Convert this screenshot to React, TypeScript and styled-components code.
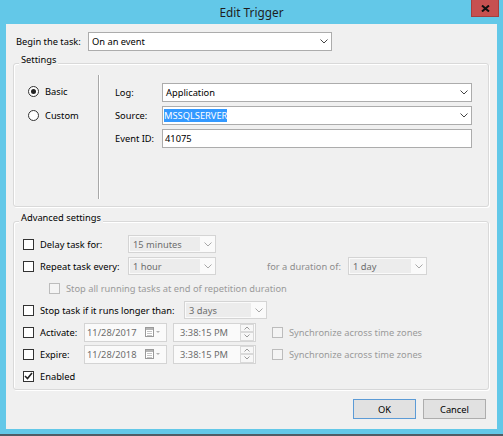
import React from 'react';
import styled, { createGlobalStyle } from 'styled-components';

const GlobalStyle = createGlobalStyle`
  html, body {
    margin: 0;
    padding: 0;
  }
  body {
    font-family: "Noto Sans", "DejaVu Sans", sans-serif;
    font-size: 9.3px;
    color: #000;
    background: #fff;
  }
  * {
    box-sizing: border-box;
  }
`;

const Window = styled.div`
  width: 503px;
  height: 436px;
  background: #63c8e8;
  border-bottom: 2px solid #4f5d66;
  display: flex;
  flex-direction: column;
`;

const TitleBar = styled.div`
  height: 24px;
  display: grid;
  grid-template-columns: 1fr auto 1fr;
  align-items: start;
`;

const Title = styled.div`
  grid-column: 2;
  font-size: 11.8px;
  line-height: 25px;
  color: #1e1e1e;
`;

const CloseButton = styled.div`
  grid-column: 3;
  justify-self: end;
  margin-right: 4px;
  width: 28px;
  height: 17px;
  background: #c75050;
  border: 1px solid #a53f3f;
  border-top: none;
  display: flex;
  align-items: center;
  justify-content: center;
`;

const Client = styled.div`
  margin: 0 6px;
  height: 405px;
  background: #f0f0f0;
  padding: 8px 8px 0 7px;
  display: flex;
  flex-direction: column;
`;

const BeginRow = styled.div`
  display: flex;
  align-items: center;
  height: 19px;
  padding-left: 3px;
`;

const FieldLabel = styled.span<{ $width: number }>`
  width: ${(p) => p.$width}px;
  flex-shrink: 0;
  white-space: nowrap;
`;

const Combo = styled.div<{ $width?: number; $height?: number; $disabled?: boolean }>`
  width: ${(p) => (p.$width ? `${p.$width}px` : '100%')};
  height: ${(p) => p.$height ?? 19}px;
  display: flex;
  align-items: stretch;
  background: ${(p) => (p.$disabled ? '#fafafa' : '#fff')};
  border: 1px solid ${(p) => (p.$disabled ? '#d4d4d4' : '#acacac')};
  color: ${(p) => (p.$disabled ? '#6d6d6d' : '#000')};
  flex-shrink: 0;
`;

const ComboValue = styled.div<{ $disabled?: boolean; $pad?: number }>`
  flex: 1;
  display: flex;
  align-items: center;
  padding-left: ${(p) => p.$pad ?? 3}px;
  margin: ${(p) => (p.$disabled ? '1px 0 1px 1px' : '0')};
  background: ${(p) => (p.$disabled ? '#ececec' : 'transparent')};
  white-space: nowrap;
  overflow: hidden;
`;

const ComboArrow = styled.div`
  width: 15px;
  display: flex;
  align-items: center;
  justify-content: center;
`;

const Selected = styled.span`
  background: #3399ff;
  color: #fff;
  line-height: 13px;
`;

const GroupBox = styled.div<{ $height: number; $top: number }>`
  margin-top: ${(p) => p.$top}px;
  height: ${(p) => p.$height}px;
  border: 1px solid #d9d9d9;
  border-radius: 3px;
  box-shadow: inset 1px 1px 0 #fff, 1px 1px 0 #fff;
  display: flex;
  flex-direction: column;
  flex-shrink: 0;
`;

const GroupTitle = styled.div`
  align-self: flex-start;
  margin: -11px 0 -3px 5px;
  padding: 0 2px;
  line-height: 14px;
  background: #f0f0f0;
  position: relative;
`;

const SettingsBody = styled.div`
  flex: 1;
  display: flex;
  padding: 11px 0 7px;
`;

const RadioColumn = styled.div`
  width: 84px;
  padding: 9px 0 0 14px;
  display: flex;
  flex-direction: column;
  gap: 10px;
`;

const OptionLabel = styled.label<{ $disabled?: boolean }>`
  display: flex;
  align-items: center;
  gap: 6px;
  height: 14px;
  white-space: nowrap;
  color: ${(p) => (p.$disabled ? '#9a9a9a' : '#000')};
`;

const RadioCircle = styled.span<{ $checked?: boolean }>`
  width: 11px;
  height: 11px;
  border-radius: 50%;
  border: 1px solid #333;
  background: #fff;
  display: flex;
  align-items: center;
  justify-content: center;
  flex-shrink: 0;
  &::after {
    content: '';
    width: 5px;
    height: 5px;
    border-radius: 50%;
    background: ${(p) => (p.$checked ? '#222' : 'transparent')};
  }
`;

const Separator = styled.div`
  width: 2px;
  border-left: 1px solid #a8a8a8;
  border-right: 1px solid #fff;
`;

const FormGrid = styled.div`
  flex: 1;
  padding: 8px 16px 0 15px;
  display: grid;
  grid-template-columns: 47px 1fr;
  grid-auto-rows: 19px;
  row-gap: 4px;
  align-content: start;
  align-items: center;
`;

const TextBox = styled.div<{ $pad?: number }>`
  height: 19px;
  border: 1px solid #acacac;
  background: #fff;
  display: flex;
  align-items: center;
  padding-left: ${(p) => p.$pad ?? 2}px;
`;

const AdvancedBody = styled.div`
  padding: 11px 0 0 9px;
  display: flex;
  flex-direction: column;
`;

const ARow = styled.div<{ $indent?: number }>`
  height: 22px;
  display: flex;
  align-items: center;
  padding-left: ${(p) => p.$indent ?? 0}px;
`;

const CheckCell = styled(OptionLabel)<{ $width?: number }>`
  width: ${(p) => (p.$width ? `${p.$width}px` : 'auto')};
  flex-shrink: 0;
`;

const CheckBox = styled.span<{ $disabled?: boolean }>`
  width: 11px;
  height: 11px;
  border: 1px solid ${(p) => (p.$disabled ? '#bcbcbc' : '#333')};
  background: ${(p) => (p.$disabled ? '#f4f4f4' : '#fff')};
  display: flex;
  align-items: center;
  justify-content: center;
  flex-shrink: 0;
`;

const MutedLabel = styled.span<{ $width: number; $gap: number }>`
  width: ${(p) => p.$width}px;
  margin-left: ${(p) => p.$gap}px;
  color: #8d8d8d;
  white-space: nowrap;
  flex-shrink: 0;
`;

const DateBox = styled.div<{ $gap?: number }>`
  width: 83px;
  height: 19px;
  margin-left: ${(p) => p.$gap ?? 0}px;
  border: 1px solid #d4d4d4;
  background: #fafafa;
  color: #6d6d6d;
  display: flex;
  align-items: stretch;
  flex-shrink: 0;
`;

const DateText = styled.div<{ $pad: number }>`
  flex: 1;
  display: flex;
  align-items: center;
  padding-left: ${(p) => p.$pad}px;
  white-space: nowrap;
`;

const DatePicker = styled.div`
  display: flex;
  align-items: center;
  gap: 2px;
  padding-right: 5px;
`;

const Spinner = styled.div`
  width: 14px;
  margin: 0 1px 0 0;
  display: flex;
  flex-direction: column;
`;

const SpinButton = styled.div`
  flex: 1;
  border: 1px solid #d9d9d9;
  background: #f7f7f7;
  display: flex;
  align-items: center;
  justify-content: center;
`;

const SyncCell = styled(CheckCell)`
  margin-left: 16px;
`;

const ButtonRow = styled.div`
  display: flex;
  justify-content: flex-end;
  gap: 7px;
  margin-top: 9px;
  padding-right: 3px;
`;

const Button = styled.button<{ $default?: boolean }>`
  width: 63px;
  height: 20px;
  padding: 0;
  font: inherit;
  color: #000;
  background: #e1e1e1;
  border: 1px solid ${(p) => (p.$default ? '#5c9bd6' : '#adadad')};
`;

const Chevron = ({ color = '#444' }: { color?: string }) => (
  <svg width="8" height="5" viewBox="0 0 8 5">
    <path d="M0.5 0.5 L4 4 L7.5 0.5" fill="none" stroke={color} strokeWidth="1" />
  </svg>
);

const SpinArrow = ({ up }: { up?: boolean }) => (
  <svg width="6" height="4" viewBox="0 0 6 4">
    <path d={up ? 'M0.5 3.5 L3 1 L5.5 3.5' : 'M0.5 0.5 L3 3 L5.5 0.5'} fill="none" stroke="#9a9a9a" strokeWidth="1" />
  </svg>
);

const CalendarIcon = () => (
  <svg width="16" height="10" viewBox="0 0 16 10">
    <rect x="0.5" y="0.5" width="8" height="9" fill="#fff" stroke="#9a9a9a" />
    <rect x="1" y="1" width="7" height="2" fill="#b5b5b5" />
    <path d="M2 4.5 H7 M2 6.5 H7 M2 8.5 H7" stroke="#c4c4c4" />
    <path d="M11 4 L15 4 L13 6 Z" fill="#b0b0b0" />
  </svg>
);

const Check = () => (
  <svg width="9" height="8" viewBox="0 0 9 8">
    <path d="M1 4 L3.5 6.5 L8 1" fill="none" stroke="#222" strokeWidth="1.6" />
  </svg>
);

const DisabledCombo = ({ width, value }: { width: number; value: string }) => (
  <Combo $width={width} $height={18} $disabled>
    <ComboValue $disabled>{value}</ComboValue>
    <ComboArrow>
      <Chevron color="#a8a8a8" />
    </ComboArrow>
  </Combo>
);

const DateTimeRow = ({ label, date }: { label: string; date: string }) => (
  <ARow>
    <CheckCell $width={61}>
      <CheckBox />
      {label}
    </CheckCell>
    <DateBox>
      <DateText $pad={2}>{date}</DateText>
      <DatePicker>
        <CalendarIcon />
      </DatePicker>
    </DateBox>
    <DateBox $gap={6}>
      <DateText $pad={6}>3:38:15 PM</DateText>
      <Spinner>
        <SpinButton>
          <SpinArrow up />
        </SpinButton>
        <SpinButton>
          <SpinArrow />
        </SpinButton>
      </Spinner>
    </DateBox>
    <SyncCell $disabled>
      <CheckBox $disabled />
      Synchronize across time zones
    </SyncCell>
  </ARow>
);

export default function App() {
  return (
    <>
      <GlobalStyle />
      <Window>
        <TitleBar>
          <Title>Edit Trigger</Title>
          <CloseButton>
            <svg width="9" height="7" viewBox="0 0 9 7">
              <path d="M1 0.5 L8 6.5 M8 0.5 L1 6.5" stroke="#111" strokeWidth="2" />
            </svg>
          </CloseButton>
        </TitleBar>
        <Client>
          <BeginRow>
            <FieldLabel $width={72}>Begin the task:</FieldLabel>
            <Combo $width={244}>
              <ComboValue>On an event</ComboValue>
              <ComboArrow>
                <Chevron />
              </ComboArrow>
            </Combo>
          </BeginRow>

          <GroupBox $top={12} $height={144}>
            <GroupTitle>Settings</GroupTitle>
            <SettingsBody>
              <RadioColumn>
                <OptionLabel>
                  <RadioCircle $checked />
                  Basic
                </OptionLabel>
                <OptionLabel>
                  <RadioCircle />
                  Custom
                </OptionLabel>
              </RadioColumn>
              <Separator />
              <FormGrid>
                <FieldLabel $width={47}>Log:</FieldLabel>
                <Combo>
                  <ComboValue>Application</ComboValue>
                  <ComboArrow>
                    <Chevron />
                  </ComboArrow>
                </Combo>
                <FieldLabel $width={47}>Source:</FieldLabel>
                <Combo>
                  <ComboValue $pad={1}>
                    <Selected>MSSQLSERVER</Selected>
                  </ComboValue>
                  <ComboArrow>
                    <Chevron />
                  </ComboArrow>
                </Combo>
                <FieldLabel $width={47}>Event ID:</FieldLabel>
                <TextBox>41075</TextBox>
              </FormGrid>
            </SettingsBody>
          </GroupBox>

          <GroupBox $top={14} $height={169}>
            <GroupTitle>Advanced settings</GroupTitle>
            <AdvancedBody>
              <ARow>
                <CheckCell $width={105}>
                  <CheckBox />
                  Delay task for:
                </CheckCell>
                <DisabledCombo width={88} value="15 minutes" />
              </ARow>
              <ARow>
                <CheckCell $width={105}>
                  <CheckBox />
                  Repeat task every:
                </CheckCell>
                <DisabledCombo width={88} value="1 hour" />
                <MutedLabel $width={81} $gap={51}>
                  for a duration of:
                </MutedLabel>
                <DisabledCombo width={79} value="1 day" />
              </ARow>
              <ARow $indent={26}>
                <CheckCell $disabled>
                  <CheckBox $disabled />
                  Stop all running tasks at end of repetition duration
                </CheckCell>
              </ARow>
              <ARow>
                <CheckCell $width={161}>
                  <CheckBox />
                  Stop task if it runs longer than:
                </CheckCell>
                <DisabledCombo width={83} value="3 days" />
              </ARow>
              <DateTimeRow label="Activate:" date="11/28/2017" />
              <DateTimeRow label="Expire:" date="11/28/2018" />
              <ARow>
                <CheckCell>
                  <CheckBox>
                    <Check />
                  </CheckBox>
                  Enabled
                </CheckCell>
              </ARow>
            </AdvancedBody>
          </GroupBox>

          <ButtonRow>
            <Button $default>OK</Button>
            <Button>Cancel</Button>
          </ButtonRow>
        </Client>
      </Window>
    </>
  );
}
